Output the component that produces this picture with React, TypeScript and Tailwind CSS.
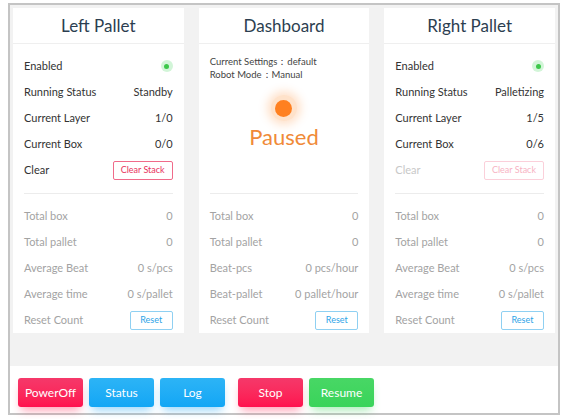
import React from "react";

type Row = { label: string; value?: React.ReactNode };

function StatRow({ label, value, muted }: Row & { muted?: boolean }) {
  return (
    <div
      className={`flex h-[26px] items-center justify-between ${
        muted ? "text-[#a3a3a3]" : "text-[#333]"
      }`}
    >
      <span>{label}</span>
      <span>{value}</span>
    </div>
  );
}

function GreenDot() {
  return (
    <span className="flex size-[12px] items-center justify-center rounded-full bg-[#4cd964]/25">
      <span className="size-[5px] rounded-full bg-[#3cc84a]" />
    </span>
  );
}

function SmallButton({
  children,
  tone,
}: {
  children: React.ReactNode;
  tone: "red" | "redFaded" | "blue";
}) {
  const tones = {
    red: "border-[#f06b8a] text-[#e8335d]",
    redFaded: "border-[#fbd0da] text-[#f7b3c3]",
    blue: "border-[#8fd0f2] text-[#2fa4e7] w-[43px]",
  };
  return (
    <button
      className={`flex h-[19px] items-center justify-center rounded-[2px] border bg-white px-[7px] text-[9px] ${tones[tone]}`}
    >
      {children}
    </button>
  );
}

function Card({ title, children }: { title: string; children: React.ReactNode }) {
  return (
    <div className="flex flex-col bg-white">
      <div className="flex h-[36px] items-center justify-center border-b border-[#efefef] text-[17px] text-[#2c3e50]">
        {title}
      </div>
      <div className="px-[11px]">{children}</div>
    </div>
  );
}

function Divider() {
  return <div className="h-px bg-[#ececec]" />;
}

function PalletCard({
  title,
  status,
  layer,
  box,
  disabledClear,
}: {
  title: string;
  status: string;
  layer: string;
  box: string;
  disabledClear?: boolean;
}) {
  return (
    <Card title={title}>
      <div className="h-[149px] pt-[9px]">
        <StatRow label="Enabled" value={<GreenDot />} />
        <StatRow label="Running Status" value={status} />
        <StatRow label="Current Layer" value={layer} />
        <StatRow label="Current Box" value={box} />
        <div
          className={`flex h-[26px] items-center justify-between ${
            disabledClear ? "text-[#c8c8c8]" : "text-[#333]"
          }`}
        >
          <span>Clear</span>
          <SmallButton tone={disabledClear ? "redFaded" : "red"}>Clear Stack</SmallButton>
        </div>
      </div>
      <Divider />
      <div className="pt-[9px]">
        <StatRow muted label="Total box" value="0" />
        <StatRow muted label="Total pallet" value="0" />
        <StatRow muted label="Average Beat" value="0 s/pcs" />
        <StatRow muted label="Average time" value="0 s/pallet" />
        <div className="flex h-[26px] items-center justify-between text-[#a3a3a3]">
          <span>Reset Count</span>
          <SmallButton tone="blue">Reset</SmallButton>
        </div>
      </div>
    </Card>
  );
}

function DashboardCard() {
  return (
    <Card title="Dashboard">
      <div className="flex h-[149px] flex-col pt-[11px]">
        <div className="text-[9.5px] leading-[13px] text-[#444]">
          <div>Current Settings：default</div>
          <div>Robot Mode：Manual</div>
        </div>
        <div className="mt-[14px] flex justify-center">
          <span className="flex size-[26px] items-center justify-center rounded-full bg-[#ff8a2a]/25 shadow-[0_0_8px_4px_rgba(255,140,50,0.25)]">
            <span className="size-[17px] rounded-full bg-[#ff8020]" />
          </span>
        </div>
        <div className="mt-[2px] text-center text-[22px] leading-[28px] text-[#f08a38]">
          Paused
        </div>
      </div>
      <Divider />
      <div className="pt-[9px]">
        <StatRow muted label="Total box" value="0" />
        <StatRow muted label="Total pallet" value="0" />
        <StatRow muted label="Beat-pcs" value="0 pcs/hour" />
        <StatRow muted label="Beat-pallet" value="0 pallet/hour" />
        <div className="flex h-[26px] items-center justify-between text-[#a3a3a3]">
          <span>Reset Count</span>
          <SmallButton tone="blue">Reset</SmallButton>
        </div>
      </div>
    </Card>
  );
}

function ActionButton({
  children,
  color,
  className = "",
}: {
  children: React.ReactNode;
  color: "red" | "blue" | "green";
  className?: string;
}) {
  const colors = {
    red: "bg-gradient-to-b from-[#f5386a] to-[#ff0f4e] shadow-[0_6px_10px_-3px_rgba(255,30,80,0.45)]",
    blue: "bg-gradient-to-b from-[#2cb4f6] to-[#11a6f5] shadow-[0_6px_10px_-3px_rgba(20,160,245,0.45)]",
    green: "bg-gradient-to-b from-[#48d765] to-[#39d45a] shadow-[0_6px_10px_-3px_rgba(60,210,90,0.45)]",
  };
  return (
    <button
      className={`flex h-[29px] w-[65px] items-center justify-center rounded-[3px] text-[12px] text-white ${colors[color]} ${className}`}
    >
      {children}
    </button>
  );
}

export default function App() {
  return (
    <div className="h-[419px] w-[568px] bg-white pl-[8px] pt-[3px] font-['Lato',sans-serif] text-[11px]">
      <div className="flex h-[412px] w-[552px] flex-col border-2 border-[#c4c4c4]">
        <div className="grid h-[361px] grid-cols-3 items-start gap-x-[15px] bg-[#f2f2f2] px-[3px] pt-[3px]">
          <PalletCard title="Left Pallet" status="Standby" layer="1/0" box="0/0" />
          <DashboardCard />
          <PalletCard
            title="Right Pallet"
            status="Palletizing"
            layer="1/5"
            box="0/6"
            disabledClear
          />
        </div>
        <div className="flex gap-[6px] pl-[8px] pt-[12px]">
          <ActionButton color="red">PowerOff</ActionButton>
          <ActionButton color="blue">Status</ActionButton>
          <ActionButton color="blue">Log</ActionButton>
          <ActionButton color="red" className="ml-[7px]">
            Stop
          </ActionButton>
          <ActionButton color="green">Resume</ActionButton>
        </div>
      </div>
    </div>
  );
}
